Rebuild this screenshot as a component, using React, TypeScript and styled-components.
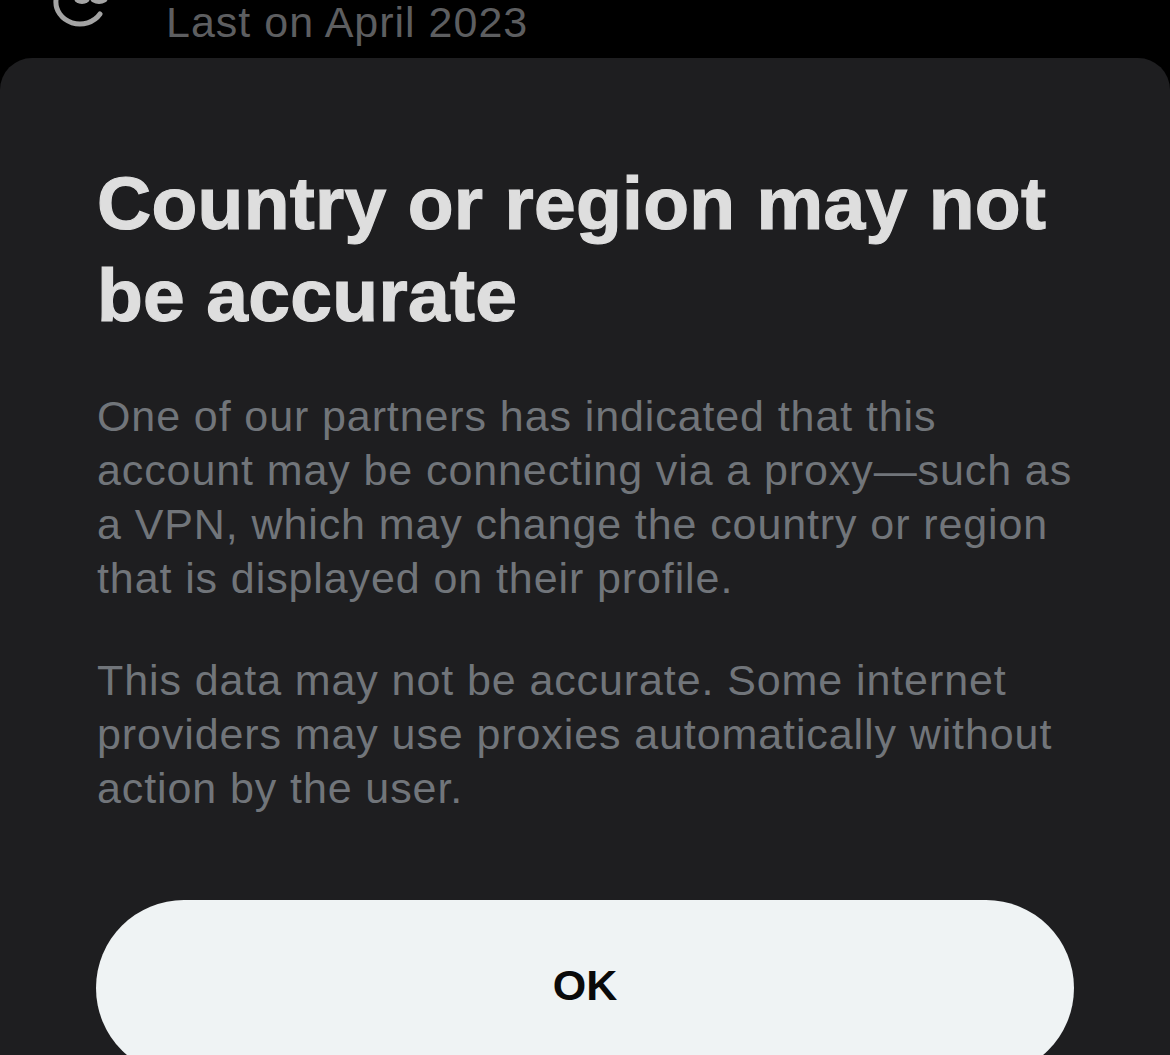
import styled, { createGlobalStyle } from 'styled-components';

const GlobalStyle = createGlobalStyle`
  html, body {
    margin: 0;
    padding: 0;
    background: #000000;
  }
  body {
    font-family: "Liberation Sans", Arial, sans-serif;
    overflow: hidden;
  }
`;

const Screen = styled.div`
  width: 1170px;
  height: 1055px;
  background: #000000;
  display: flex;
  flex-direction: column;
  overflow: hidden;
`;

const ProfileRow = styled.div`
  height: 58px;
  flex-shrink: 0;
  display: flex;
  align-items: flex-start;
  padding-left: 44px;
  gap: 58px;
  overflow: hidden;
`;

const RowIcon = styled.svg`
  width: 64px;
  height: 30px;
  flex-shrink: 0;
`;

const RowText = styled.span`
  font-size: 43px;
  line-height: 44px;
  letter-spacing: 1px;
  color: #5d5e60;
  white-space: nowrap;
`;

const Sheet = styled.div`
  flex: 1;
  background: #1e1e20;
  border-radius: 32px 32px 0 0;
  padding: 99px 96px 0 96px;
  display: flex;
  flex-direction: column;
`;

const Title = styled.h1`
  margin: 0 0 48px 0;
  padding-left: 1px;
  font-size: 75px;
  line-height: 92px;
  font-weight: 700;
  color: #dedede;
  letter-spacing: 0.3px;
  -webkit-text-stroke: 1.2px #dedede;
  white-space: nowrap;
`;

const Paragraph = styled.p`
  margin: 0 0 48px 0;
  padding-left: 1px;
  font-size: 43px;
  line-height: 54px;
  letter-spacing: 0.9px;
  color: #71757a;
  white-space: nowrap;
`;

const OkButton = styled.button`
  margin-top: 37px;
  width: 978px;
  height: 176px;
  flex-shrink: 0;
  border: none;
  border-radius: 88px;
  background: #eff3f4;
  color: #0a0a0a;
  font-family: "Liberation Sans", Arial, sans-serif;
  font-size: 43px;
  font-weight: 700;
  padding: 0 0 6px 0;
  cursor: pointer;
`;

const App = () => {
  return (
    <>
      <GlobalStyle />
      <Screen>
        <ProfileRow>
          <RowIcon viewBox="0 0 64 30">
            <path
              d="M12 0 A 24 22 0 0 0 56 14"
              fill="none"
              stroke="#a4a4a4"
              strokeWidth="5"
              strokeLinecap="round"
            />
            <ellipse cx="38" cy="-2" rx="8" ry="6" fill="#a4a4a4" />
            <ellipse cx="55" cy="-2" rx="9" ry="6" fill="#a4a4a4" />
          </RowIcon>
          <RowText>Last on April 2023</RowText>
        </ProfileRow>
        <Sheet>
          <Title>
            Country or region may not
            <br />
            be accurate
          </Title>
          <Paragraph>
            One of our partners has indicated that this
            <br />
            account may be connecting via a proxy—such as
            <br />
            a VPN, which may change the country or region
            <br />
            that is displayed on their profile.
          </Paragraph>
          <Paragraph>
            This data may not be accurate. Some internet
            <br />
            providers may use proxies automatically without
            <br />
            action by the user.
          </Paragraph>
          <OkButton>OK</OkButton>
        </Sheet>
      </Screen>
    </>
  );
};

export default App;
